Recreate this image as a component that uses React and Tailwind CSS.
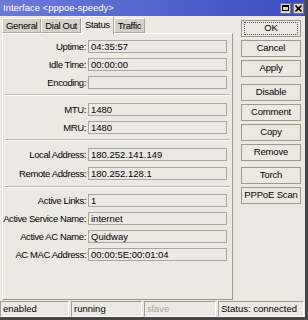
import React from 'react';

const FONT = { fontFamily: '"Liberation Sans", Arial, sans-serif' };

// read-only field row: label on the left, sunken box on the right
const Field = ({ label, value }) => (
  <div className="flex items-center h-[13px]">
    <div className="w-[83px] flex justify-end text-[9.5px] leading-none text-black whitespace-nowrap tracking-[-0.4px]">{label}:</div>
    <div className="ml-[2px] w-[139px] h-[13px] border border-[#aaa69e] bg-[#ece9e4] text-[9.5px] leading-[11px] pl-[2px] text-black whitespace-nowrap overflow-hidden">
      {value}
    </div>
  </div>
);

const Separator = ({ className = '' }) => (
  <div className={`mx-[2px] border-t border-[#b9b5ad] border-b border-b-white ${className}`}></div>
);

const Button = ({ children, focused = false, className = '' }) => (
  <div className={`h-[17px] border border-[#9c988f] bg-[#ece9e3] flex items-center justify-center text-[9.5px] tracking-[-0.15px] text-black whitespace-nowrap ${className}`}>
    {focused ? (
      <div className="w-[54px] h-[13px] border border-dotted border-[#555] flex items-center justify-center">{children}</div>
    ) : children}
  </div>
);

const Tab = ({ children, active = false }) => (
  <div
    className={
      active
        ? 'h-[18px] px-[3px] bg-[#ece9e3] border border-b-0 border-[#aaa69e] border-t-white border-l-white text-[9.5px] tracking-[-0.35px] leading-[13px] pt-[1px] text-black -mb-[1px] relative'
        : 'h-[15px] px-[3px] bg-[#d5d1c9] border border-[#aaa69e] border-t-white border-l-white text-[9.5px] tracking-[-0.35px] leading-[13px] text-black'
    }
  >
    {children}
  </div>
);

const StatusCell = ({ children, width, muted = false }) => (
  <div
    className={`shrink-0 h-[16px] border border-[#a19d95] border-b-white border-r-white text-[9.5px] leading-[14px] pl-[2px] whitespace-nowrap overflow-hidden ${muted ? 'text-[#a8a49c]' : 'text-black'}`}
    style={{ width }}
  >
    {children}
  </div>
);

export default function App() {
  return (
    <div className="w-[308px] h-[320px] bg-[#ece9e3] flex flex-col border-r-[3px] border-b-[3px] border-[#474747] overflow-hidden" style={FONT}>
      {/* title bar */}
      <div className="h-[16px] bg-gradient-to-r from-[#6c7bd8] to-[#3e4ac3] flex items-center pl-[3px] pr-[1px]">
        <span className="text-white text-[9.5px] leading-none">Interface &lt;pppoe-speedy&gt;</span>
        <div className="ml-auto flex gap-[2px]">
          <div className="w-[11px] h-[11px] bg-[#d9d9d9] border border-[#777] flex items-center justify-center">
            <div className="w-[7px] h-[6px] border border-black border-t-2"></div>
          </div>
          <div className="w-[11px] h-[11px] bg-[#d9d9d9] border border-[#777] flex items-center justify-center">
            <svg width="7" height="7" viewBox="0 0 7 7">
              <path d="M0.5 0.5 L6.5 6.5 M6.5 0.5 L0.5 6.5" stroke="black" strokeWidth="1.6" />
            </svg>
          </div>
        </div>
      </div>

      {/* body */}
      <div className="flex-1 flex pl-[2px]">
        <div className="w-[231px] flex flex-col">
          <div className="h-[17px] flex items-end">
            <Tab>General</Tab>
            <Tab>Dial Out</Tab>
            <Tab active>Status</Tab>
            <Tab>Traffic</Tab>
          </div>
          <div className="flex-1 border border-white border-r-[#9c988f] border-b-[#9c988f] pt-[6px] flex flex-col">
            <div className="flex flex-col gap-[5px]">
              <Field label="Uptime" value="04:35:57" />
              <Field label="Idle Time" value="00:00:00" />
              <Field label="Encoding" value="" />
            </div>
            <Separator className="mt-[5px] mb-[7px]" />
            <div className="flex flex-col gap-[5px]">
              <Field label="MTU" value="1480" />
              <Field label="MRU" value="1480" />
            </div>
            <Separator className="mt-[5px] mb-[7px]" />
            <div className="flex flex-col gap-[6px]">
              <Field label="Local Address" value="180.252.141.149" />
              <Field label="Remote Address" value="180.252.128.1" />
            </div>
            <Separator className="mt-[6px] mb-[6px]" />
            <div className="flex flex-col gap-[5px]">
              <Field label="Active Links" value="1" />
              <Field label="Active Service Name" value="internet" />
              <Field label="Active AC Name" value="Quidway" />
              <Field label="AC MAC Address" value="00:00:5E:00:01:04" />
            </div>
          </div>
        </div>

        <div className="ml-[8px] w-[60px] pt-[4px] flex flex-col gap-[3px]">
          <Button focused>OK</Button>
          <Button>Cancel</Button>
          <Button>Apply</Button>
          <Button className="mt-[4px]">Disable</Button>
          <Button>Comment</Button>
          <Button>Copy</Button>
          <Button>Remove</Button>
          <Button className="mt-[3px]">Torch</Button>
          <Button>PPPoE Scan</Button>
        </div>
      </div>

      {/* status bar */}
      <div className="mt-[1px] flex gap-[2px]">
        <StatusCell width={69}>enabled</StatusCell>
        <StatusCell width={71}>running</StatusCell>
        <StatusCell width={72} muted>slave</StatusCell>
        <StatusCell width={86}>Status: connected</StatusCell>
      </div>
    </div>
  );
}
